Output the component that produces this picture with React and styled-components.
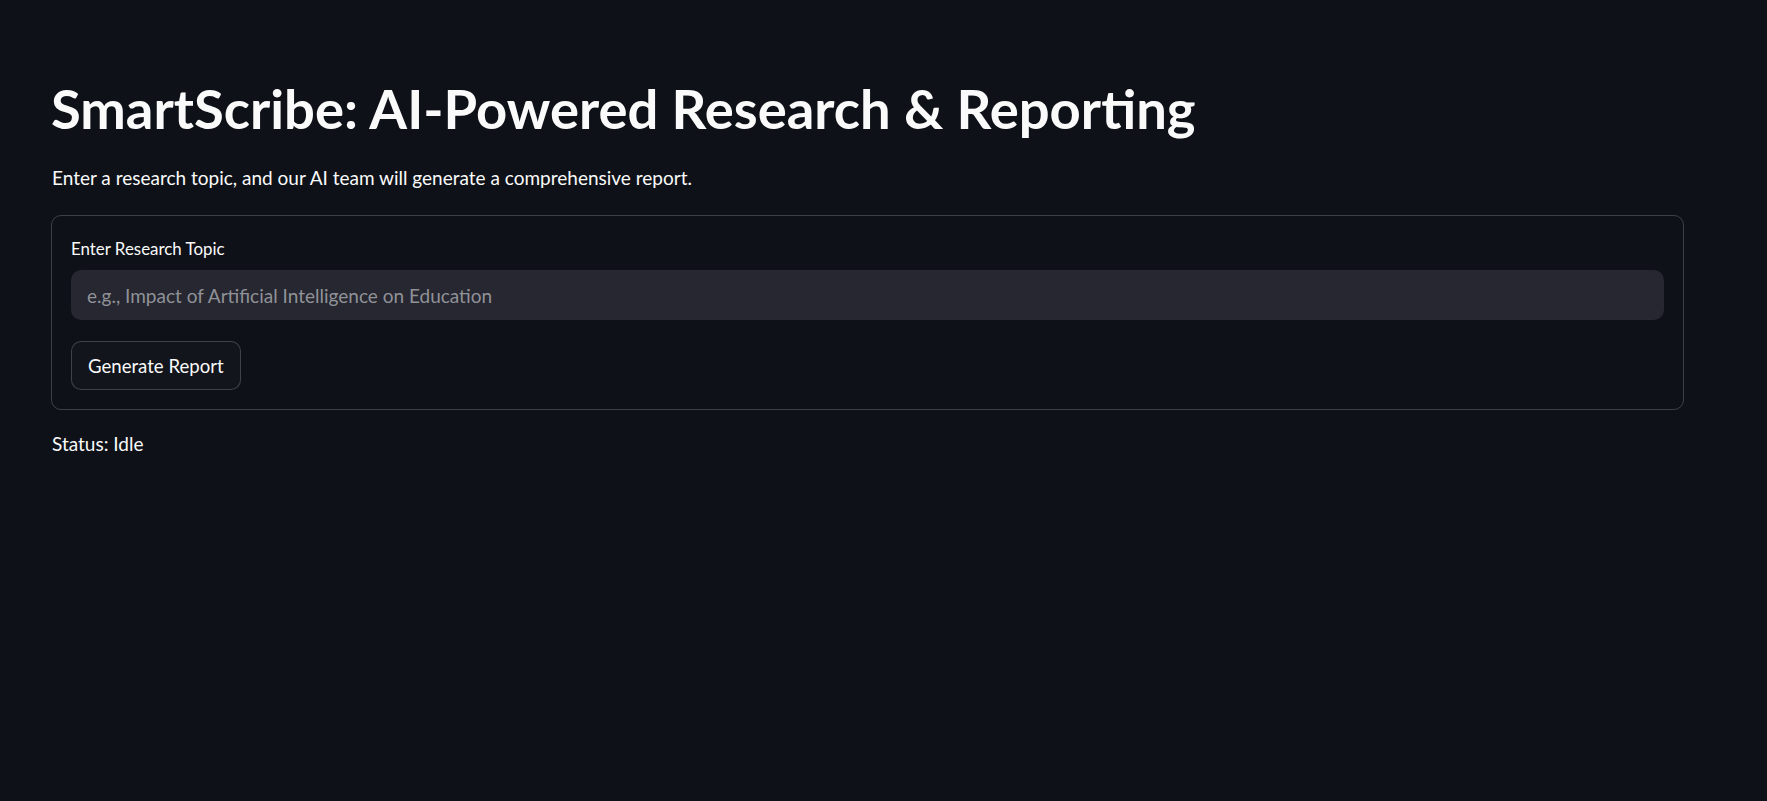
import React from 'react'
import styled, { createGlobalStyle } from 'styled-components'

const GlobalStyle = createGlobalStyle`
  body {
    margin: 0;
    background: #0e1117;
    color: #fafafa;
    font-family: Lato, "Noto Sans", sans-serif;
  }
`

const Main = styled.main`
  padding: 76px 83px 0 51px;
  min-height: 100vh;
  box-sizing: border-box;
`

const Title = styled.h1`
  margin: 0;
  font-size: 54.4px;
  line-height: 1.2;
  font-weight: 700;
  color: #fafafa;
`

const Text = styled.p`
  margin: ${props => props.top}px 0 0 1px;
  font-size: 19px;
  line-height: 1.6;
`

const FormCard = styled.form`
  margin-top: 22px;
  border: 1px solid rgba(250, 250, 250, 0.2);
  border-radius: 10px;
  padding: 20.5px 19px 19px;
  display: flex;
  flex-direction: column;
`

const Label = styled.label`
  font-size: 16.9px;
  line-height: 1.4;
`

const Input = styled.input`
  margin-top: 10px;
  height: 50px;
  box-sizing: border-box;
  border: none;
  outline: none;
  border-radius: 10px;
  background: #262730;
  color: #fafafa;
  padding: 0 16px;
  font-family: inherit;
  font-size: 19px;

  &::placeholder {
    color: #909298;
  }
`

const Button = styled.button`
  align-self: flex-start;
  margin-top: 21px;
  height: 49px;
  padding: 0 16px;
  border: 1px solid rgba(250, 250, 250, 0.2);
  border-radius: 10px;
  background: #12151c;
  color: #fafafa;
  font-family: inherit;
  font-size: 18.6px;
  cursor: pointer;
`

const App = () => {
  return (
    <>
      <GlobalStyle />
      <Main>
        <Title>SmartScribe: AI-Powered Research &amp; Reporting</Title>
        <Text top={21.5}>Enter a research topic, and our AI team will generate a comprehensive report.</Text>
        <FormCard onSubmit={e => e.preventDefault()}>
          <Label htmlFor="topic">Enter Research Topic</Label>
          <Input id="topic" placeholder="e.g., Impact of Artificial Intelligence on Education" />
          <Button type="submit">Generate Report</Button>
        </FormCard>
        <Text top={19}>Status: Idle</Text>
      </Main>
    </>
  )
}

export default App
